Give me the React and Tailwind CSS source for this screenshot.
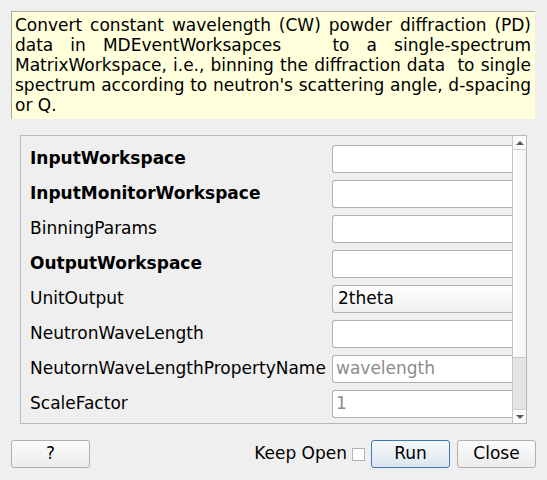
const rows = [
  { label: 'InputWorkspace', bold: true },
  { label: 'InputMonitorWorkspace', bold: true },
  { label: 'BinningParams' },
  { label: 'OutputWorkspace', bold: true },
  { label: 'UnitOutput', combo: '2theta' },
  { label: 'NeutronWaveLength' },
  { label: 'NeutornWaveLengthPropertyName', placeholder: 'wavelength' },
  { label: 'ScaleFactor', placeholder: '1' },
];

function Field({ row }) {
  if (row.combo) {
    return (
      <div className="flex-1 h-[28px] flex items-center pl-[5px] border border-r-0 border-[#b2b2b2] rounded-l-[3px] bg-gradient-to-b from-[#fdfdfd] to-[#f1f1f1] text-black">
        {row.combo}
      </div>
    );
  }
  return (
    <div className="flex-1 h-[28px] flex items-center pl-[3px] border border-r-0 border-[#b2b2b2] rounded-l-[3px] bg-white text-[#8c8c8c]">
      {row.placeholder || ''}
    </div>
  );
}

function Scrollbar() {
  return (
    <div className="w-[14px] flex flex-col border-l border-[#c4c4c4] bg-[#e4e4e4]">
      <div className="h-[14px] flex items-center justify-center bg-[#fafafa] border-b border-[#cfcfcf]">
        <div className="w-0 h-0 border-l-[4px] border-r-[4px] border-b-[4px] border-l-transparent border-r-transparent border-b-[#555]" />
      </div>
      <div className="h-[208px] bg-gradient-to-r from-[#fdfdfd] to-[#f3f3f3] border-b border-[#c8c8c8]" />
      <div className="flex-1" />
      <div className="h-[14px] flex items-center justify-center bg-[#fafafa] border-t border-[#cfcfcf]">
        <div className="w-0 h-0 border-l-[4px] border-r-[4px] border-t-[4px] border-l-transparent border-r-transparent border-t-[#555]" />
      </div>
    </div>
  );
}

export default function App() {
  return (
    <div
      className="w-[547px] h-[480px] bg-[#efefef] text-[17px] text-black flex flex-col"
      style={{ fontFamily: '"DejaVu Sans", Verdana, sans-serif' }}
    >
      {/* HELP TEXT */}
      <div className="ml-[11px] mt-[11px] w-[524px] h-[108px] border-t border-l border-[#a8a8a8] bg-[#ffffdc] pl-[3px] pr-[4px] pt-[3px] leading-[20px] text-justify">
        Convert constant wavelength (CW) powder diffraction (PD) data in MDEventWorksapces&nbsp;&nbsp; to a single-spectrum MatrixWorkspace, i.e., binning the diffraction data&nbsp; to single spectrum according to neutron's scattering angle, d-spacing or Q.
      </div>

      {/* PROPERTIES */}
      <div className="ml-[20px] mt-[16px] w-[507px] h-[289px] border border-[#b8b8b8] flex overflow-hidden">
        <div className="flex-1 flex flex-col gap-[7px] pt-[9px] pl-[9px] overflow-hidden">
          {rows.map((row) => (
            <div key={row.label} className="flex items-center h-[28px] shrink-0">
              <div className={`w-[302px] shrink-0 ${row.bold ? 'font-bold' : ''}`}>
                {row.label}
              </div>
              <Field row={row} />
            </div>
          ))}
        </div>
        <Scrollbar />
      </div>

      {/* BUTTONS */}
      <div className="flex items-center mt-[16px] px-[11px]">
        <button className="w-[79px] h-[28px] border border-[#b0b0b0] rounded-[3px] bg-gradient-to-b from-[#fcfcfc] to-[#ececec]">
          ?
        </button>
        <div className="flex-1" />
        <span>Keep Open</span>
        <div className="ml-[5px] w-[13px] h-[13px] border border-[#b4b4b4] bg-white" />
        <button className="ml-[6px] w-[79px] h-[28px] border border-[#3a7ab8] rounded-[3px] bg-gradient-to-b from-[#f6f9fc] to-[#dce5ee]">
          Run
        </button>
        <button className="ml-[7px] w-[79px] h-[28px] border border-[#b0b0b0] rounded-[3px] bg-gradient-to-b from-[#fcfcfc] to-[#ececec]">
          Close
        </button>
      </div>
    </div>
  );
}
